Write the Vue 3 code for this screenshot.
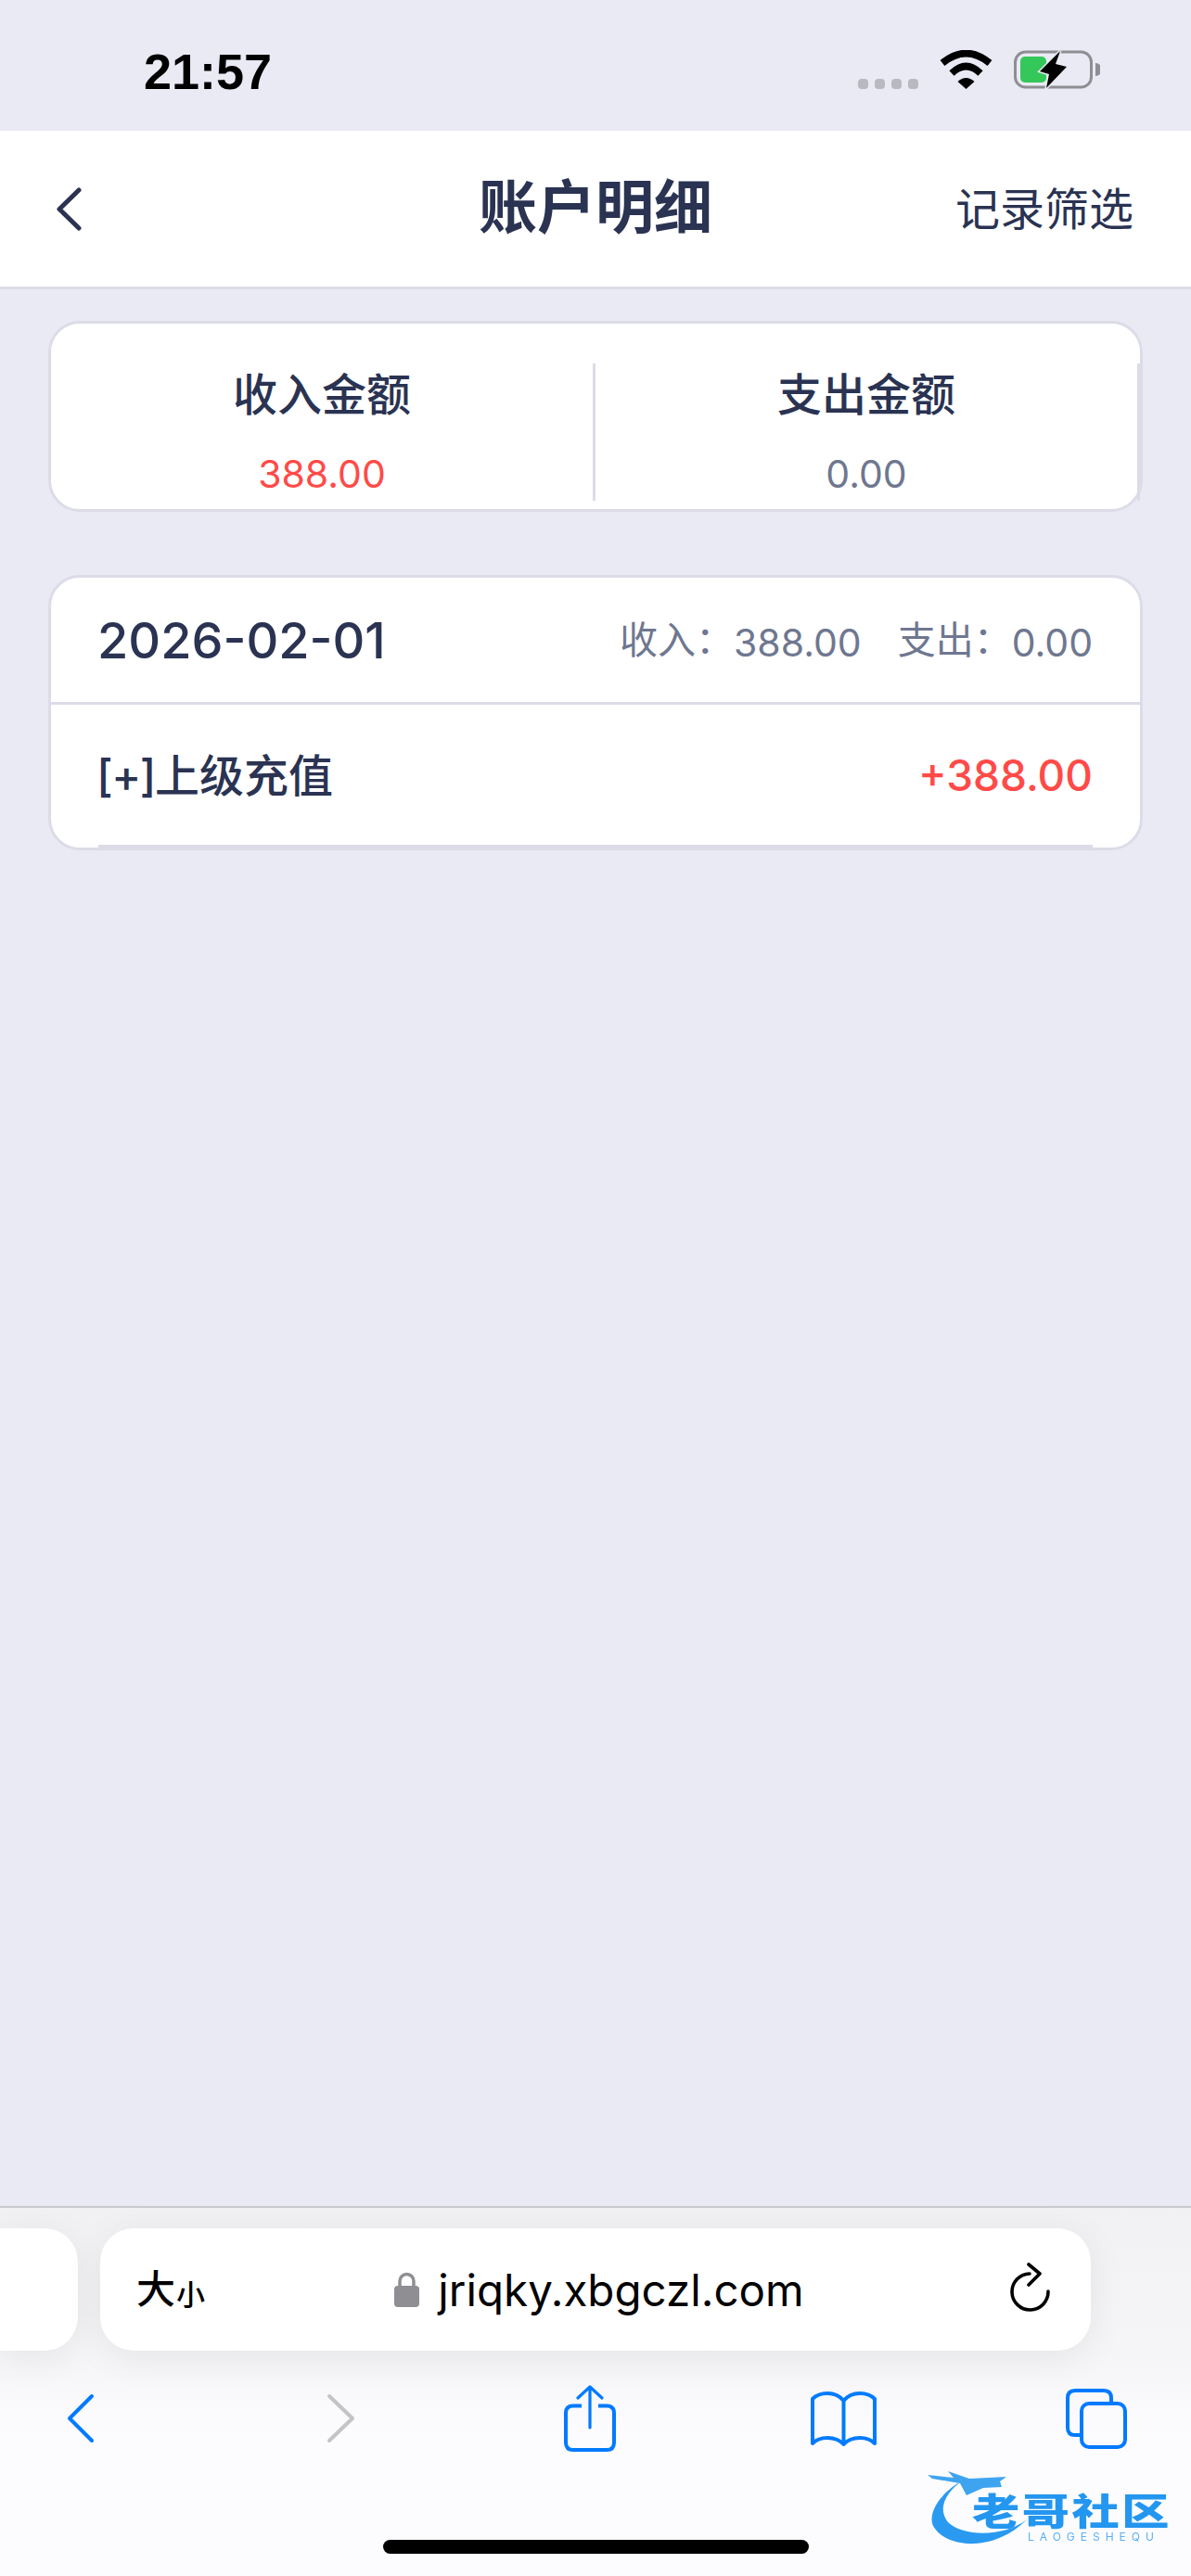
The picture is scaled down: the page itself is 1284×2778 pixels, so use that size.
<template>
  <div class="page">
    <div class="status">
      <span class="time">21:57</span>
      <div class="status-icons">
        <svg class="dots" viewBox="0 0 65 11" width="65" height="11">
          <rect v-for="x in [0, 18, 36, 54]" :key="x" :x="x" width="11" height="11" rx="4" fill="#b9b9c2" />
        </svg>
        <svg class="wifi" viewBox="0 0 57 42" width="57" height="42" fill="none" stroke="#000" stroke-width="7.5">
          <path d="M3 14Q28.5 -7 54 14" />
          <path d="M13 25Q28.5 10 44 25" />
          <path d="M19.5 34Q28.5 26 37.5 34L28.5 42Z" fill="#000" stroke="none" />
        </svg>
        <svg class="battery" viewBox="0 0 93 42" width="93" height="42">
          <rect x="1.5" y="2" width="82" height="38" rx="11" fill="none" stroke="#8e8e93" stroke-width="3" />
          <rect x="7" y="7" width="28" height="28" rx="5" fill="#34c759" />
          <path d="M50 1L28 23L38 26L35 41L57 18L45 15Z" fill="#000" stroke="#e9eaf3" stroke-width="3" paint-order="stroke" />
          <path d="M88 14A7 7 0 0 1 88 28Z" fill="#8e8e93" />
        </svg>
      </div>
    </div>

    <header class="nav">
      <svg class="nav-back" viewBox="0 0 27 47" width="27" height="47" fill="none" stroke="#2a3352" stroke-width="5" stroke-linecap="round" stroke-linejoin="round">
        <path d="M24 3L3 23.5L24 44" />
      </svg>
      <h1>账户明细</h1>
      <span class="filter">记录筛选</span>
    </header>

    <main class="content">
      <section class="card totals">
        <div v-for="t in totals" :key="t.label" class="col">
          <div class="col-label">{{ t.label }}</div>
          <div class="col-value" :class="t.cls">{{ t.value }}</div>
        </div>
      </section>

      <section class="card">
        <div class="day-head">
          <span class="date">2026-02-01</span>
          <span class="day-sum">
            <span><span class="cjk">收入：</span>388.00</span>
            <span><span class="cjk">支出：</span>0.00</span>
          </span>
        </div>
        <div class="rec">
          <span class="rec-name"><span class="mark">[+]</span>上级充值</span>
          <span class="rec-amt">+388.00</span>
        </div>
      </section>
    </main>

    <footer class="safari">
      <div class="pills">
        <div class="pill-prev"></div>
        <div class="pill">
          <span class="aa"><b>大</b><i>小</i></span>
          <span class="addr">
            <svg viewBox="0 0 27 38" width="27" height="38">
              <path d="M6 16V10A7.5 7.5 0 0 1 21 10V16" fill="none" stroke="#8e8e93" stroke-width="3.5" />
              <rect y="15" width="27" height="23" rx="4" fill="#8e8e93" />
            </svg>
            <span>jriqky.xbgczl.com</span>
          </span>
          <svg class="reload" viewBox="0 0 43 54" width="43" height="54" fill="none" stroke="#000" stroke-width="3.6" stroke-linecap="round" stroke-linejoin="round">
            <path d="M21 12A19.5 19.5 0 1 0 41 31" />
            <path d="M20 2L32 12L20 24" />
          </svg>
        </div>
      </div>

      <div class="toolbar">
        <svg viewBox="0 0 30 54" width="30" height="54" fill="none" stroke="#007aff" stroke-width="4" stroke-linecap="round" stroke-linejoin="round">
          <path d="M27 3L3 27L27 51" />
        </svg>
        <svg class="t-next" viewBox="0 0 31 54" width="31" height="54" fill="none" stroke="#c4c4c6" stroke-width="4" stroke-linecap="round" stroke-linejoin="round">
          <path d="M3 3L28 27L3 51" />
        </svg>
        <svg class="t-share" viewBox="0 0 56 72" width="56" height="72" fill="none" stroke="#007aff" stroke-width="4" stroke-linecap="round" stroke-linejoin="round">
          <path d="M19 22.5H10Q2 22.5 2 30V62Q2 70 10 70H46Q54 70 54 62V30Q54 22.5 46 22.5H37" stroke-linecap="butt" />
          <path d="M28 46V3M15 14L28 2L41 14" stroke-width="3.2" />
        </svg>
        <svg class="t-book" viewBox="0 0 71 59" width="71" height="59" fill="none" stroke="#007aff" stroke-width="4" stroke-linejoin="round">
          <path d="M35.5 10Q29 2 18 2Q8 2 2 8V56Q8 50 18 50Q29 50 35.5 57Q42 50 53 50Q63 50 69 56V8Q63 2 53 2Q42 2 35.5 10ZM35.5 10V57" />
        </svg>
        <svg class="t-tabs" viewBox="0 0 66 65" width="66" height="65" fill="none" stroke="#007aff" stroke-width="4">
          <path d="M16 50H10Q2 50 2 42V10Q2 2 10 2H41Q49 2 49 10V15" />
          <rect x="17" y="16" width="47" height="47" rx="8" />
        </svg>
      </div>

      <div class="home-bar"></div>
    </footer>

    <div class="watermark">
      <svg viewBox="0 0 263 80" width="263" height="80">
        <path d="M38 10C10 25 -2 50 8 62C25 85 75 85 107 52C85 70 40 72 22 55C10 40 20 22 38 10Z" fill="#2a9af0" />
        <path d="M0 4L28 7L22 0L45 8L85 6L78 11L80 17L60 18L42 26L35 13L5 8Z" fill="#3fa4f0" />
      </svg>
      <span class="wm-name">老哥社区</span>
      <span class="wm-sub">LAOGESHEQU</span>
    </div>
  </div>
</template>

<script setup>
const totals = [
  { label: '收入金额', value: '388.00', cls: 'red' },
  { label: '支出金额', value: '0.00', cls: 'gray' }
]
</script>

<style>
body { background: #e9eaf3; }
</style>

<style scoped>
.page {
  position: relative;
  display: flex;
  flex-direction: column;
  height: 2778px;
  overflow: hidden;
  background: #e9eaf3;
  color: #2a3352;
  font-family: Inter, "Noto Sans CJK SC", sans-serif;
}

.status { display: flex; height: 141px; box-sizing: border-box; padding: 54px 98px 0 155px; }
.time { font: 700 54px/46px "Liberation Sans", sans-serif; color: #000; }
.status-icons { display: flex; align-items: flex-start; margin-left: auto; }
.dots { margin: 31px 23px 0 0; }
.battery { margin-left: 23px; }

.nav {
  display: flex;
  align-items: center;
  justify-content: space-between;
  position: relative;
  height: 168px;
  padding: 0 62px 0 61px;
  background: #fff;
  border-bottom: 3px solid #dcdce8;
}
.nav h1 {
  position: absolute;
  left: 0;
  right: 0;
  top: 40px;
  margin: 0;
  text-align: center;
  font-size: 63px;
  line-height: 84px;
  font-weight: 600;
}
.filter { font-size: 48px; position: relative; top: -3px; }

.content { flex: 1; padding: 34px 52px 0; }
.card { background: #fff; border: 3px solid #dcdce8; border-radius: 34px; }
.totals { display: flex; padding: 43px 0 9px; margin-bottom: 68px; }
.col { flex: 1; border-right: 3px solid #dcdce8; text-align: center; }
.col-label { font-size: 48px; line-height: 68px; font-weight: 500; }
.col-value { font-size: 41px; line-height: 58px; padding-top: 22px; }
.red { color: #ff4a48; }
.gray { color: #6f7790; }

.day-head {
  display: flex;
  align-items: center;
  justify-content: space-between;
  height: 134px;
  padding: 0 51px 0 50px;
  border-bottom: 3px solid #dcdce8;
}
.date { font-size: 54px; font-weight: 500; }
.day-sum { display: flex; gap: 39px; font-size: 41px; color: #6f7790; }
.cjk { position: relative; top: -3px; }
.rec {
  display: flex;
  align-items: center;
  justify-content: space-between;
  height: 151px;
  margin: 0 51px;
  font-size: 48px;
  border-bottom: 3px solid #dcdce8;
}
.rec-name { position: relative; top: -3px; left: -2px; font-weight: 500; }
.mark { letter-spacing: -1.5px; }
.rec-amt { font-size: 46px; font-weight: 500; color: #ff4a48; }

.safari {
  height: 399px;
  box-sizing: border-box;
  border-top: 2px solid #c9c9d0;
  background: linear-gradient(#f1f1f4, #f6f6f9 170px, #fcfcff 240px);
}
.pills { display: flex; gap: 24px; padding-top: 22px; }
.pill-prev, .pill { height: 132px; background: #fff; box-shadow: 0 8px 40px rgba(0, 0, 0, .07); }
.pill-prev { width: 84px; border-radius: 0 36px 36px 0; }
.pill {
  display: flex;
  align-items: center;
  justify-content: space-between;
  width: 1068px;
  box-sizing: border-box;
  padding: 0 44px 0 39px;
  border-radius: 36px;
}
.aa { display: flex; align-items: flex-end; gap: 1px; color: #000; line-height: 1; }
.aa b { font-size: 42px; font-weight: 500; }
.aa i { font-size: 31px; font-style: normal; font-weight: 500; }
.addr { display: flex; align-items: center; gap: 20px; margin-right: 18px; font-size: 47.5px; color: #000; }
.reload { margin-top: -4px; }

.toolbar { display: flex; align-items: center; height: 72px; margin-top: 37px; padding-left: 72px; }
.t-next { margin-left: 250px; }
.t-share { margin-left: 225px; }
.t-book { margin-left: 210px; }
.t-tabs { margin-left: 204px; }

.home-bar { width: 459px; height: 15px; margin: 95px auto 0; border-radius: 8px; background: #000; }

.watermark {
  position: absolute;
  left: 1000px;
  top: 2665px;
  width: 263px;
  height: 80px;
  color: #2396f0;
  filter: blur(.7px);
}
.watermark svg { display: block; }
.wm-name {
  position: absolute;
  left: 48px;
  top: 24px;
  font-size: 40px;
  line-height: 40px;
  font-weight: 900;
  letter-spacing: 2px;
  white-space: nowrap;
  transform: scaleX(1.28);
  transform-origin: left center;
}
.wm-sub {
  position: absolute;
  left: 108px;
  top: 65px;
  font-size: 12px;
  line-height: 12px;
  letter-spacing: 6px;
  white-space: nowrap;
  opacity: .75;
}
</style>
